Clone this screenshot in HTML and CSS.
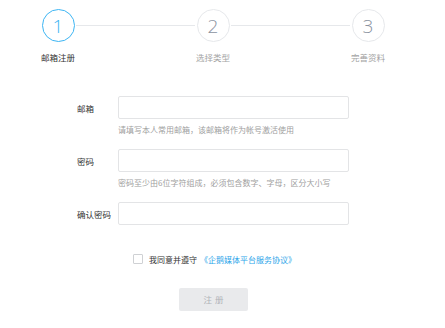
FILE: index.html
```html
<!DOCTYPE html>
<html lang="zh-CN">
<head>
	<meta charset="UTF-8">
	<title>邮箱注册</title>
	<link rel="stylesheet" href="styles.css">
</head>
<body>
	<div id="wrap">
		<!-- 步骤条 -->
		<div class="steps">
			<div class="step active">
				<span class="num">1</span>
				<span class="name">邮箱注册</span>
			</div>
			<div class="line"></div>
			<div class="step">
				<span class="num">2</span>
				<span class="name">选择类型</span>
			</div>
			<div class="line"></div>
			<div class="step">
				<span class="num">3</span>
				<span class="name">完善资料</span>
			</div>
		</div>

		<!-- 表单 -->
		<div class="form">
			<div class="field">
				<div class="row">
					<label>邮箱</label>
					<input type="text">
				</div>
				<p class="tip">请填写本人常用邮箱，该邮箱将作为帐号激活使用</p>
			</div>
			<div class="field">
				<div class="row">
					<label>密码</label>
					<input type="password">
				</div>
				<p class="tip">密码至少由6位字符组成，必须包含数字、字母，区分大小写</p>
			</div>
			<div class="field">
				<div class="row">
					<label>确认密码</label>
					<input type="password">
				</div>
			</div>
		</div>

		<div class="agree">
			<span class="check"></span>
			<span>我同意并遵守</span>
			<a href="javascript:void(0);">《企鹅媒体平台服务协议》</a>
		</div>

		<div class="submit">
			<a href="javascript:void(0);" class="btn">注册</a>
		</div>
	</div>
</body>
</html>
```

FILE: styles.css
```css
*{padding:0;margin:0;box-sizing:border-box;}
a{text-decoration:none;}
body{background:#fff;font-family:"Noto Sans CJK SC","Liberation Sans",sans-serif;font-size:8px;color:#333;}
#wrap{width:445px;}

.steps{display:flex;align-items:flex-start;margin:9px 0 0 40px;width:346px;}
.step{width:36px;display:flex;flex-direction:column;align-items:center;}
.step .num{width:33px;height:33px;border:1px solid #e6e8eb;border-radius:50%;display:flex;align-items:center;justify-content:center;font-family:"Open Sans","Liberation Sans",sans-serif;font-weight:300;font-size:19px;color:#8b93a1;}
.step .name{margin-top:9px;font-size:8.5px;line-height:12px;color:#a3a3a3;white-space:nowrap;}
.step.active .num{border:1.5px solid #3db5f3;color:#3db5f3;}
.step.active .name{color:#333;}
.line{flex:1;height:1px;background:#e6e8eb;margin-top:16px;}

.form{margin:33px 0 0 77px;}
.field{margin-bottom:13px;}
.row{display:flex;align-items:center;}
.row label{width:41px;font-size:8.5px;color:#333;white-space:nowrap;}
.row input{width:231px;height:23px;border:1px solid #e3e4e6;border-radius:2px;outline:none;}
.tip{margin:5px 0 0 41px;font-size:8px;line-height:12px;color:#a0a0a0;}

.agree{display:flex;align-items:center;margin:28px 0 0 133px;height:12px;font-size:8px;color:#333;}
.agree .check{width:10px;height:10px;border:1px solid #cfd1d4;border-radius:1px;margin-right:6px;}
.agree a{color:#2ea6ea;margin-left:3px;}

.submit{margin:23px 0 0 179px;}
.btn{display:block;width:69px;height:23px;line-height:23px;background:#e9eaec;border-radius:2px;text-align:center;color:#b0b3b8;font-size:8.5px;letter-spacing:3px;text-indent:3px;}
```
